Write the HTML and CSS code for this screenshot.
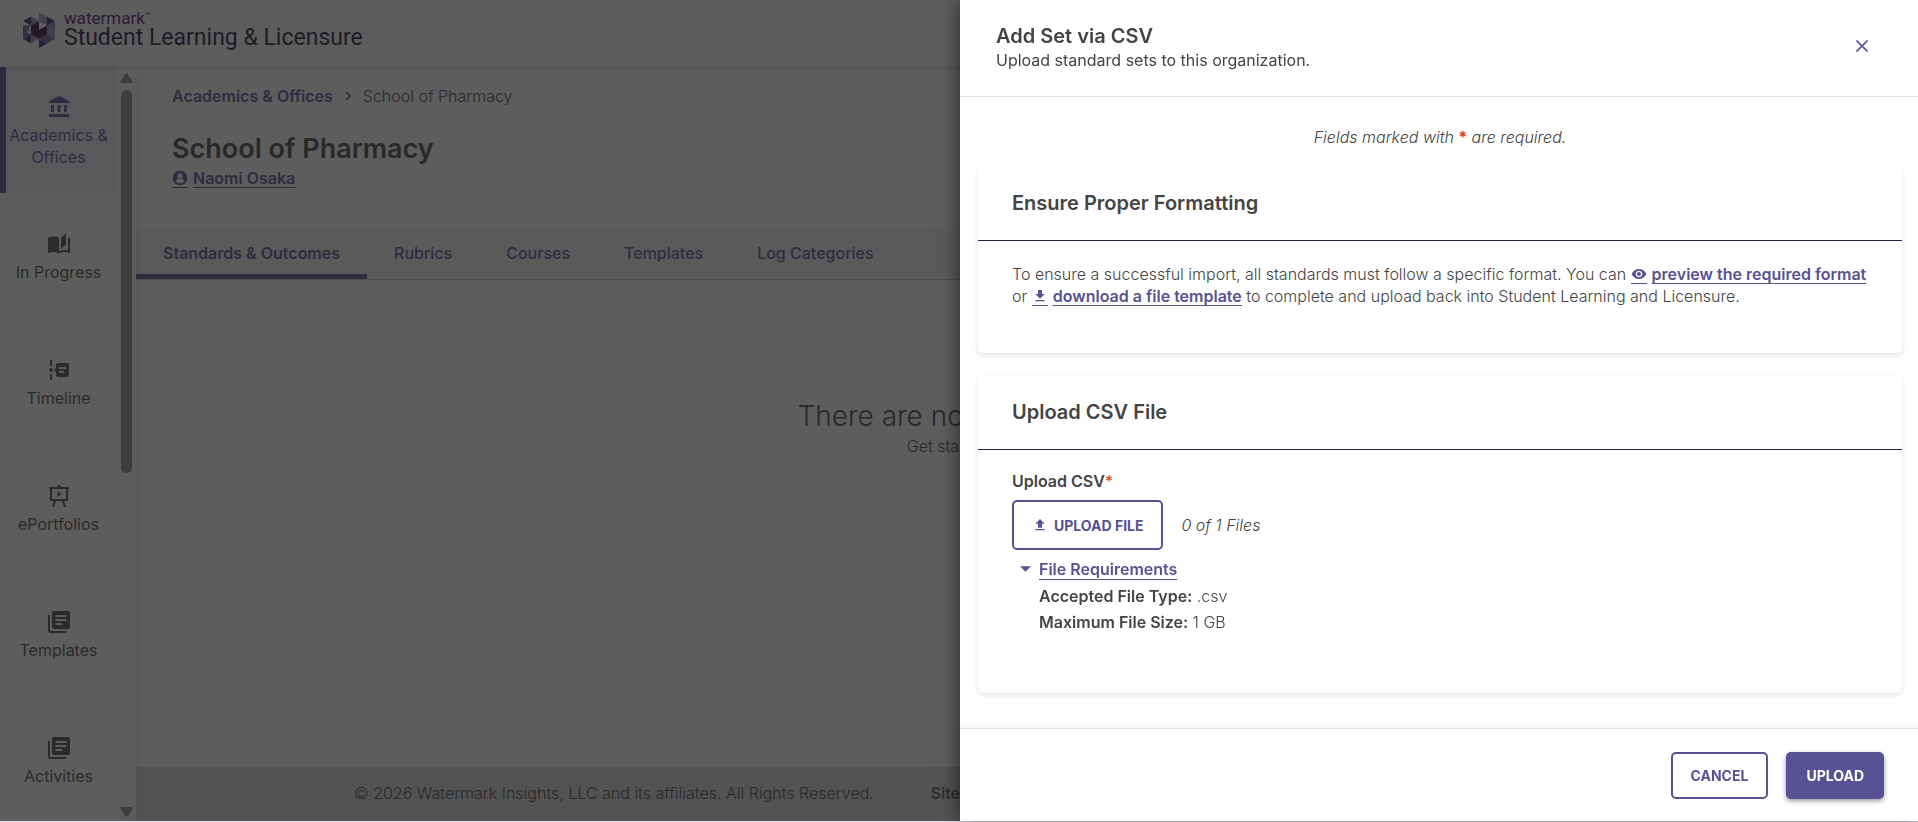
FILE: index.html
```html
<!DOCTYPE html>
<html lang="en">
<head>
  <meta charset="UTF-8" />
  <meta name="viewport" content="width=device-width, initial-scale=1.0"/>
  <title>Student Learning &amp; Licensure</title>
  <link rel="stylesheet" href="styles.css">
</head>
<body>

<div class="app">
  <header class="topbar">
    <svg class="logo" width="32" height="36" viewBox="0 0 32 36">
      <path fill="#a79bd0" d="M16 0l8 4.500-8 4.500z"/>
      <path fill="#8b80b8" d="M8 4.500l8 4.500-8 4.500zM24 13.500l8-4.500v9z"/>
      <path fill="#4a1a78" d="M0 9l8-4.500v9zM24 4.500l8 4.500-8 4.500zM0 27l8-4.500v9zM16 27l8 4.500-8 4.500z"/>
      <path fill="#9a8fc4" d="M16 9l8-4.500v9zM0 13.500l8 4.500-8 4.500zM24 13.500l8 4.500-8 4.500zM24 22.500l8-4.500v9zM8 22.500l8 4.500-8 4.500z"/>
      <path fill="#6d5c9f" d="M0 13.500l8 0-8 9zM0 18l8 4.500L0 27zM24 22.500l8 4.500-8 4.500zM16 27l8-4.500v9z"/>
      <path fill="#22103a" d="M8 13.500L16 9v9l8-4.500v9L16 27l-8-4.500z"/>
    </svg>
    <div class="brand">
      <div class="brand-top">watermark<span class="tm">™</span></div>
      <div class="brand-name">Student Learning &amp; Licensure</div>
    </div>
  </header>

  <div class="body">
    <!-- Side navigation -->
    <nav class="sidebar">
      <div class="side-list">
        <a class="side-item active" href="#">
          <svg width="24" height="24" viewBox="0 0 24 24"><path d="M4 10v7h3v-7H4zm6.500 0v7h3v-7h-3zM2 22h20v-3H2v3zm15-12v7h3v-7h-3zM12 1L2 6v2h20V6L12 1z"/></svg>
          Academics &amp; Offices
        </a>
        <a class="side-item" href="#">
          <svg width="24" height="24" viewBox="0 0 24 24"><path d="M19 1l-5 5v11l5-4.500V1zM1 6v14.650c0 .25.250.5.500.5.100 0 .150-.050.250-.050C3.100 20.450 5.050 20 6.500 20c1.950 0 4.050.4 5.500 1.500V6c-1.450-1.100-3.550-1.500-5.500-1.500S2.450 4.900 1 6zm22 13.500V6c-.6-.45-1.250-.75-2-1v13.500c-1.100-.35-2.300-.5-3.500-.5-1.700 0-4.150.65-5.500 1.500v2c1.350-.85 3.800-1.500 5.500-1.500 1.650 0 3.350.3 4.750 1.050.1.050.15.050.25.050.25 0 .5-.25.5-.5v-1.100z"/></svg>
          In Progress
        </a>
        <a class="side-item" href="#">
          <svg width="24" height="24" viewBox="0 0 24 24"><path fill-rule="evenodd" d="M3 2h2v6H3zM3 16h2v6H3zM4 10a2 2 0 1 1 0 4 2 2 0 0 1 0-4zM7 12l2-2V7a2 2 0 0 1 2-2h9a2 2 0 0 1 2 2v10a2 2 0 0 1-2 2h-9a2 2 0 0 1-2-2v-3zM12 9v2h7V9zm0 4v2h5v-2z"/></svg>
          Timeline
        </a>
        <a class="side-item" href="#">
          <svg width="24" height="24" viewBox="0 0 24 24"><path fill-rule="evenodd" d="M10 3a2 2 0 0 1 4 0h8v2h-1v12h-4l2 6h-2l-2-6H9l-2 6H5l2-6H3V5H2V3zM5 5v10h14V5zM10.500 7l4 3-4 3z"/></svg>
          ePortfolios
        </a>
        <a class="side-item" href="#">
          <svg width="24" height="24" viewBox="0 0 24 24"><path d="M3 5H1v16c0 1.100.9 2 2 2h16v-2H3V5zm18-4H7c-1.100 0-2 .9-2 2v14c0 1.100.9 2 2 2h14c1.100 0 2-.9 2-2V3c0-1.100-.9-2-2-2zm-1.500 6h-11V5h11v2zm0 4h-11V9h11v2zm-4 4h-7v-2h7v2z"/></svg>
          Templates
        </a>
        <a class="side-item" href="#">
          <svg width="24" height="24" viewBox="0 0 24 24"><path d="M3 5H1v16c0 1.100.9 2 2 2h16v-2H3V5zm18-4H7c-1.100 0-2 .9-2 2v14c0 1.100.9 2 2 2h14c1.100 0 2-.9 2-2V3c0-1.100-.9-2-2-2zm-1.500 6h-11V5h11v2zm0 4h-11V9h11v2zm-4 4h-7v-2h7v2z"/></svg>
          Activities
        </a>
      </div>
      <div class="scrollbar">
        <svg width="13" height="10" viewBox="0 0 13 10"><path d="M5.500 1q1-1.500 2 0l5 7q.5 2-1 2h-10q-1.500 0-1-2z"/></svg>
        <div class="track"><div class="thumb"></div></div>
        <svg width="13" height="10" viewBox="0 0 13 10"><path d="M5.500 9q1 1.500 2 0l5-7q.5-2-1-2h-10q-1.500 0-1 2z"/></svg>
      </div>
    </nav>

    <main class="main">
      <div class="page-head">
        <div class="crumbs">
          <a href="#">Academics &amp; Offices</a>
          <svg width="6" height="8" viewBox="0 0 6 8"><path d="M1 0l4 4-4 4" fill="none" stroke="#4a4a4a" stroke-width="1.500"/></svg>
          <span>School of Pharmacy</span>
        </div>
        <h1>School of Pharmacy</h1>
        <a class="icon-link" href="#"><span class="icon"><svg width="16" height="16" viewBox="0 0 24 24"><path fill-rule="evenodd" d="M12 1a11 11 0 1 0 0 22 11 11 0 0 0 0-22zm0 4a4 4 0 1 1 0 8 4 4 0 0 1 0-8zm-7 10q7-3 14 0-2 5-7 5t-7-5z"/></svg></span><span class="label">Naomi Osaka</span></a>
      </div>

      <nav class="tabs">
        <a class="active" href="#">Standards &amp; Outcomes</a>
        <a href="#">Rubrics</a>
        <a href="#">Courses</a>
        <a href="#">Templates</a>
        <a href="#">Log Categories</a>
      </nav>

      <div class="empty">
        <h2>There are no standard sets to show</h2>
        <p>Get started by adding a new set.</p>
      </div>

      <footer class="footer">
        <span>© 2026 Watermark Insights, LLC and its affiliates. All Rights Reserved.</span>
        <a href="#">Site Map</a>
        <a href="#">Privacy Policy</a>
        <a href="#">Terms of Use</a>
        <a href="#">Accessibility Statement</a>
        <a href="#">Contact Us</a>
      </footer>
    </main>
  </div>
</div>

<!-- Drawer over the dimmed page -->
<div class="overlay">
  <section class="drawer" role="dialog" aria-labelledby="drawer-title">
    <header class="drawer-head">
      <div>
        <h2 id="drawer-title">Add Set via CSV</h2>
        <p>Upload standard sets to this organization.</p>
      </div>
      <button class="close" aria-label="Close">
        <svg width="12" height="12" viewBox="0 0 12 12"><path d="M.5.500l11 11M11.500.500L.5 11.500" fill="none" stroke="#585193" stroke-width="1.600"/></svg>
      </button>
    </header>

    <div class="drawer-body">
      <p class="required-note">Fields marked with <b>*</b> are required.</p>

      <article class="card">
        <h3>Ensure Proper Formatting</h3>
        <div class="card-body">
          <p>To ensure a successful import, all standards must follow a specific format. You can
            <a class="icon-link" href="#"><span class="icon"><svg width="16" height="16" viewBox="0 0 24 24"><path d="M12 4.500C7 4.500 2.730 7.610 1 12c1.730 4.390 6 7.500 11 7.500s9.270-3.110 11-7.500c-1.730-4.390-6-7.500-11-7.500zM12 17c-2.760 0-5-2.240-5-5s2.240-5 5-5 5 2.240 5 5-2.240 5-5 5zm0-8c-1.660 0-3 1.340-3 3s1.340 3 3 3 3-1.340 3-3-1.340-3-3-3z"/></svg></span><span class="label">preview the required format</span></a>
            or
            <a class="icon-link" href="#"><span class="icon"><svg width="16" height="16" viewBox="0 0 24 24"><path d="M19 9h-4V3H9v6H5l7 7 7-7zM5 18v2h14v-2H5z"/></svg></span><span class="label">download a file template</span></a>
            to complete and upload back into Student Learning and Licensure.</p>
        </div>
      </article>

      <article class="card">
        <h3>Upload CSV File</h3>
        <div class="card-body upload-body">
          <div class="field-label" id="csv-label">Upload CSV<b>*</b></div>
          <div class="upload-row">
            <button class="btn upload-btn" aria-describedby="csv-label">
              <svg width="16" height="16" viewBox="0 0 24 24"><path d="M9 16h6v-6h4l-7-7-7 7h4v6zm-4 2h14v2H5v-2z"/></svg>
              UPLOAD FILE
            </button>
            <em>0 of 1 Files</em>
          </div>
          <details class="requirements" open>
            <summary><svg width="11" height="6" viewBox="0 0 10 5"><path d="M0 0h10L5 5z"/></svg><span>File Requirements</span></summary>
            <p><strong>Accepted File Type:</strong> .csv</p>
            <p><strong>Maximum File Size:</strong> 1 GB</p>
          </details>
        </div>
      </article>
    </div>

    <footer class="drawer-foot">
      <button class="btn">CANCEL</button>
      <button class="btn primary">UPLOAD</button>
    </footer>
  </section>
</div>

</body>
</html>
```
FILE: styles.css
```css
* {
  box-sizing: border-box;
}
body {
  margin: 0;
  font-family: Inter, "Liberation Sans", sans-serif;
  font-size: 16px;
  font-weight: 300;
  line-height: 22px;
  color: #444;
  background: #fff;
}
h1, h2, h3, p {
  margin: 0;
}
a {
  color: #585193;
  text-decoration: none;
}
svg {
  fill: currentColor;
}
button {
  font-family: inherit;
  cursor: pointer;
}

/* App shell */
.app {
  display: flex;
  flex-direction: column;
  height: 100vh;
  overflow: hidden;
}
.topbar {
  display: flex;
  align-items: flex-start;
  gap: 9px;
  flex: none;
  height: 67px;
  padding: 12px 23px;
  box-shadow: 0 1px 4px rgba(0,0,0,0.2);
  z-index: 2;
}
.brand {
  font-family: Roboto, "Liberation Sans", sans-serif;
  font-weight: 400;
}
.brand-top {
  display: flex;
  align-items: flex-start;
  font-size: 17px;
  line-height: 12px;
  color: #4a1a78;
}
.tm {
  font-size: 9px;
  line-height: 9px;
}
.brand-name {
  font-size: 23px;
  line-height: 27px;
  color: #22103a;
}
.body {
  display: flex;
  flex: 1;
  min-height: 0;
}

/* Sidebar */
.sidebar {
  display: flex;
  flex: none;
  width: 136px;
  box-shadow: 0 0 16px rgba(0,0,0,0.12);
  z-index: 1;
}
.side-list {
  display: flex;
  flex-direction: column;
  width: 117px;
  overflow: hidden;
}
.side-item {
  display: flex;
  flex-direction: column;
  align-items: center;
  flex: none;
  gap: 5px;
  height: 126px;
  padding: 39px 6px 0;
  font-weight: 400;
  text-align: center;
  color: #4a4a4a;
}
.side-item.active {
  padding: 28px 6px 0 0;
  color: #585193;
  background: #efeff8;
  border-left: 6px solid #585193;
}
.scrollbar {
  display: flex;
  flex-direction: column;
  align-items: center;
  gap: 7px;
  width: 19px;
  padding: 6px 0 5px;
  color: #8b8b8b;
  background: #fcfcfc;
}
.track {
  flex: 1;
}
.thumb {
  width: 11px;
  height: 54%;
  border-radius: 6px;
  background: #8b8b8b;
}

/* Page */
.main {
  display: flex;
  flex-direction: column;
  flex: 1;
}
.page-head {
  height: 162px;
  padding: 18px 36px 0;
}
.crumbs {
  display: flex;
  align-items: center;
  gap: 12px;
}
.crumbs a {
  font-weight: 600;
}
h1 {
  margin: 24px 0 0;
  font-size: 27px;
  line-height: 36px;
  font-weight: 600;
}
.icon-link {
  font-weight: 600;
}
.icon-link .icon {
  display: inline-block;
  height: 18px;
  margin-right: 5px;
  border-bottom: 1px solid;
  vertical-align: -4px;
}
.icon-link svg {
  display: block;
}
.icon-link .label {
  text-decoration: underline;
  text-underline-offset: 3px;
}
.tabs {
  display: flex;
  height: 51px;
  background: #f5f5f5;
  border-bottom: 1px solid #ccc;
}
.tabs a {
  padding: 13px 27px;
  font-weight: 500;
}
.tabs a.active {
  font-weight: 600;
  border-bottom: 5px solid #585193;
}
.empty {
  flex: 1;
  padding-top: 118px;
  text-align: center;
}
.empty h2 {
  font-size: 28px;
  line-height: 37px;
  font-weight: 300;
}
.footer {
  display: flex;
  justify-content: center;
  gap: 57px;
  height: 55px;
  padding-top: 15px;
  background: #dcdcdc;
}
.footer a {
  font-weight: 500;
  color: #4a4a4a;
}

/* Drawer */
.overlay {
  position: fixed;
  inset: 0;
  display: flex;
  justify-content: flex-end;
  background: rgba(30,30,30,0.72);
  border-bottom: 1px solid #e4e4ee;
  z-index: 10;
}
.drawer {
  display: flex;
  flex-direction: column;
  width: calc(50% - 1px);
  background: #fff;
  box-shadow: 0 0 20px rgba(0,0,0,0.6);
}
.drawer-head {
  display: flex;
  justify-content: space-between;
  height: 97px;
  padding: 24px 50px 0 36px;
  border-bottom: 1px solid #e2e2e2;
}
.drawer-head h2 {
  font-size: 20px;
  line-height: 25px;
  font-weight: 600;
}
.drawer-head p {
  font-weight: 400;
}
.close {
  align-self: flex-start;
  margin-top: 16px;
  padding: 0;
  line-height: 12px;
  background: none;
  border: none;
}
.drawer-body {
  flex: 1;
  padding: 29px 16px 0 18px;
  background: #fefefe;
}
.required-note {
  margin-bottom: 19px;
  text-align: center;
  font-style: italic;
}
.required-note b {
  font-weight: 600;
  font-style: normal;
  color: #cf3f17;
}
.card {
  margin-bottom: 23px;
  border-radius: 5px;
  background: #fff;
  box-shadow: 0 2px 5px rgba(0,0,0,0.1);
}
.card h3 {
  padding: 24px 34px;
  font-size: 20px;
  line-height: 25px;
  font-weight: 600;
  border-bottom: 1px solid #2a1a4a;
}
.card-body {
  padding: 22px 34px 46px;
}
.upload-body {
  padding: 20px 34px 56px;
}
.field-label {
  font-weight: 600;
}
.field-label b {
  font-weight: 400;
  color: #cf3f17;
}
.upload-row {
  display: flex;
  align-items: center;
  gap: 18px;
  margin: 8px 0;
}
.btn {
  height: 47px;
  padding: 0 18px;
  font-size: 14px;
  font-weight: 700;
  color: #585193;
  background: #fff;
  border: 2px solid #585193;
  border-radius: 5px;
}
.upload-btn {
  display: flex;
  align-items: center;
  gap: 6px;
  height: 50px;
}
.primary {
  color: #fff;
  background: #585193;
  box-shadow: 0 2px 5px rgba(0,0,0,0.4);
}
.requirements summary {
  display: flex;
  align-items: center;
  gap: 8px;
  margin-bottom: 5px;
  padding-left: 8px;
  font-weight: 600;
  color: #585193;
  cursor: pointer;
  list-style: none;
}
.requirements summary span {
  text-decoration: underline;
  text-underline-offset: 4px;
}
.requirements p {
  margin-bottom: 4px;
  padding-left: 27px;
}
.requirements strong {
  font-weight: 600;
}
.drawer-foot {
  display: flex;
  justify-content: flex-end;
  gap: 18px;
  height: 93px;
  padding: 23px 34px;
  border-top: 1px solid #e2e2e2;
  box-shadow: 0 -2px 8px rgba(0,0,0,0.05);
}
```
